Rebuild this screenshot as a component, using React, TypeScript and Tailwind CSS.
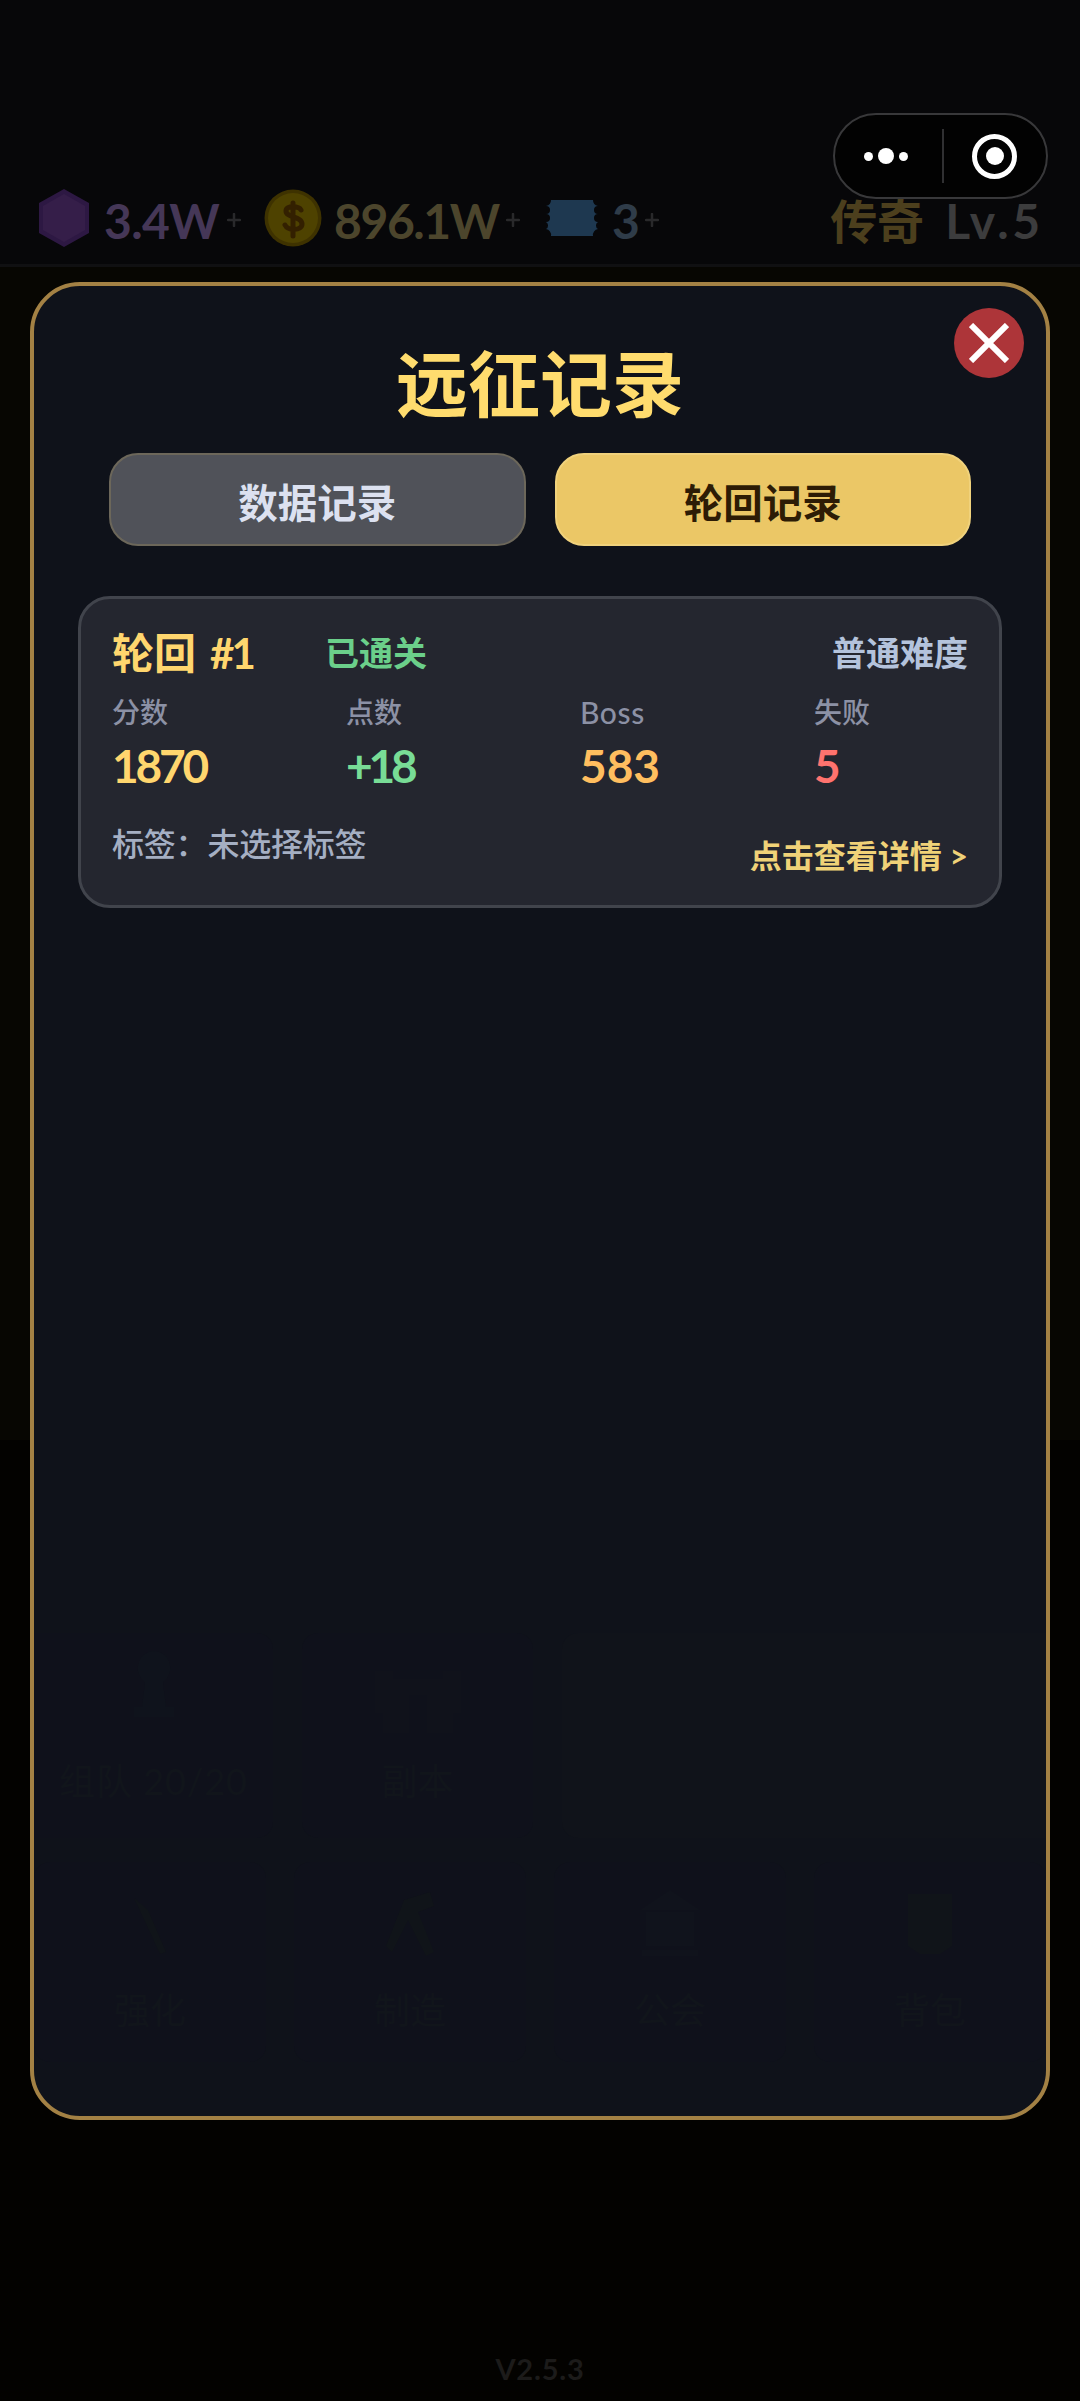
import React, { useState } from 'react';
interface Stat {
  label: string;
  value: string;
  color: string;
}
interface Tile {
  label: string;
  path: string;
  color: string;
}
const stats: Stat[] = [
  { label: '分数', value: '1870', color: 'text-[#ffd66e] tracking-[-3.2px]' },
  { label: '点数', value: '+18', color: 'text-[#78dc96] tracking-[-4.2px]' },
  { label: 'Boss', value: '583', color: 'text-[#ffbe5f]' },
  { label: '失败', value: '5', color: 'text-[#ff736e]' }
];
const tiles: Tile[] = [
  { label: '强化', path: 'M20 12 34 24 52 66 46 68z', color: 'fill-[#101419]' },
  { label: '制造', path: 'M30 14 56 6 60 20 44 26 60 66 52 70 34 34 18 66 12 60z', color: 'fill-[#101419]' },
  { label: '公会', path: 'M36 4 66 24H6zM12 26h48v34H12zM8 64h56v6H8z', color: 'fill-[#10131c]' },
  { label: '背包', path: 'M14 8h44v52l-12 8H26l-12-8z', color: 'fill-[#101419]' }
];
const PlusMark = () => <svg viewBox="0 0 14 14" className="mt-1 h-[14px] w-[14px] shrink-0">
    <path d="M7 1v12M1 7h12" stroke="#29292b" strokeWidth="2.5" strokeLinecap="round" />
  </svg>;
const ResourceBar = () => {
  return <header className="h-[267px] border-b-[3px] border-[#101012] bg-[#070709] pt-[188px]">
      <div className="flex h-[60px] items-center pl-[38px] pr-[39px] text-[48px] font-bold leading-none">
        <svg viewBox="0 0 52 60" className="h-[60px] w-[52px] shrink-0">
          <path d="M26 1 51 15v30L26 59 1 45V15z" fill="#2d1843" />
          <path d="M26 6 47 18v24L26 54 5 42V18z" fill="#351e49" />
        </svg>
        <span className="ml-[14px] mt-[6px] w-[118px] whitespace-nowrap tracking-[-0.6px] text-[#453757]">3.4W</span>
        <span className="ml-[5px]"><PlusMark /></span>
        <svg viewBox="0 0 58 58" className="ml-[23px] h-[58px] w-[58px] shrink-0">
          <circle cx="29" cy="29" r="28.5" fill="#3e3200" />
          <circle cx="29" cy="29" r="25" fill="#4e4200" />
          <path d="M37 21c-2-4-15-5-15 1 0 7 16 5 16 13 0 7-14 7-17 1M29 14v33" fill="none" stroke="#332000" strokeWidth="5" strokeLinecap="round" />
        </svg>
        <span className="ml-[12px] mt-[6px] w-[168px] whitespace-nowrap tracking-[-1.4px] text-[#4c452c]">896.1W</span>
        <span className="ml-[4px]"><PlusMark /></span>
        <svg viewBox="0 0 54 36" className="ml-[25px] h-[36px] w-[54px] shrink-0">
          <path d="M6 0h42a6 6 0 0 0 5 6 4 4 0 0 0 0 8 4 4 0 0 0 0 8 4 4 0 0 0 0 7 6 6 0 0 0-5 7H6a6 6 0 0 0-5-7 4 4 0 0 0 0-7 4 4 0 0 0 0-8 4 4 0 0 0 0-8 6 6 0 0 0 5-6z" fill="#1e3850" />
        </svg>
        <span className="ml-[13px] mt-[6px] w-[28px] text-[#2f3c49]">3</span>
        <span className="ml-[5px]"><PlusMark /></span>
        <span className="ml-auto mt-[7px] whitespace-nowrap text-[47px] text-[#4c3f1d]">传奇</span>
        <span className="-mr-[3px] ml-[21px] mt-[6px] whitespace-nowrap tracking-[3.8px] text-[#3c3c3d]">Lv.5</span>
      </div>
    </header>;
};
const Capsule = () => <div className="absolute left-[833px] top-[113px] flex h-[86px] w-[215px] items-center rounded-full border-2 border-[#38383a] bg-[#020202]">
    <div className="flex flex-1 items-center justify-center gap-[5px] pr-[4px]">
      <i className="h-[9px] w-[9px] rounded-full bg-white" />
      <i className="h-[16px] w-[16px] rounded-full bg-white" />
      <i className="h-[9px] w-[9px] rounded-full bg-white" />
    </div>
    <div className="h-[54px] w-[2px] bg-[#303032]" />
    <div className="flex flex-1 items-center justify-center">
      <div className="flex h-[45px] w-[45px] items-center justify-center rounded-full border-[5px] border-white">
        <i className="h-[18px] w-[18px] rounded-full bg-white" />
      </div>
    </div>
  </div>;
const RecordCard = () => {
  return <button className="mt-[50px] block h-[312px] w-full rounded-[32px] border-[3px] border-[#41444c] bg-[#24262f] px-[31px] text-left">
      <div className="flex h-[50px] items-center pt-[2px] leading-none">
        <span className="w-[213px] whitespace-nowrap text-[42px] font-bold text-[#ffd66e]">轮回<span className="ml-[14px] tracking-[-3px]">#1</span></span>
        <span className="text-[34px] font-bold text-[#6bcf8a]">已通关</span>
        <span className="ml-auto text-[34px] font-bold text-[#b4c3dc]">普通难度</span>
      </div>
      <div className="mt-[15px] flex">
        {stats.map(stat => <div key={stat.label} className="w-[234px] shrink-0">
            <div className="h-[40px] text-[28px] font-medium leading-[40px] text-[#8c91a5]">
              <span className={stat.label === 'Boss' ? 'text-[30px] tracking-[0.6px]' : ''}>{stat.label}</span>
            </div>
            <div className={`mt-[6px] h-[56px] text-[46px] font-bold leading-[56px] ${stat.color}`}>{stat.value}</div>
          </div>)}
      </div>
      <div className="mt-[28px] flex justify-between text-[32px] leading-[44px]">
        <span className="font-medium tracking-[-0.2px] text-[#a5afc3]">标签：未选择标签</span>
        <span className="mt-[12px] font-bold text-[#f0d278]">点击查看详情 &gt;</span>
      </div>
    </button>;
};
// camp menu dimmed behind the dialog
const CampMenu = () => <div aria-hidden="true" className="-mx-[44px] mt-[725px] text-center text-[36px] leading-[44px] text-[#11151b]">
    <div className="flex h-[205px] gap-[29px]">
      <div className="w-[239px] rounded-r-[16px] bg-[#0f111b] pt-[16px]">
        <svg viewBox="0 0 72 72" className="mx-auto h-[72px] w-[72px] fill-[#0f131c]">
          <path d="M36 2a17 17 0 0 1 9 31l3 25h8v10H16V58h8l3-25a17 17 0 0 1 9-31z" />
        </svg>
        <div className="mt-[38px] whitespace-nowrap tracking-[1px]">组队 20/20</div>
      </div>
      <div className="w-[231px] rounded-[16px] bg-[#0f111b] pt-[36px]">
        <svg viewBox="0 0 86 66" className="mx-auto h-[66px] w-[86px] fill-[#10121b]">
          <path d="M0 2h18v8h50V2h18v42h-8v20H52V26H34v38H8V44H0z" />
        </svg>
        <div className="mt-[24px]">副本</div>
      </div>
      <div className="flex-1 rounded-l-[16px] bg-[#10131a]" />
    </div>
    <div className="mt-[24px] flex h-[200px] gap-[28px]">
      {tiles.map(tile => <div key={tile.label} className="flex-1 rounded-[16px] bg-[#0f111b] pt-[24px]">
          <svg viewBox="0 0 72 72" className={`mx-auto h-[72px] w-[72px] ${tile.color}`}>
            <path d={tile.path} />
          </svg>
          <div className="mt-[30px]">{tile.label}</div>
        </div>)}
    </div>
  </div>;
export default function App() {
  const [tab, setTab] = useState('cycle');
  const active = 'border-[#f0d27c] bg-[#ebc766] text-[#2d1c05]';
  const idle = 'border-[#6c675a] bg-[#505259] text-[#dce1f0]';
  return <div className="relative flex h-[2401px] w-[1080px] flex-col overflow-hidden bg-[linear-gradient(#070602_1440px,#030200_1440px)] font-[Lato,'Noto_Sans_CJK_SC',sans-serif]">
      <ResourceBar />
      <Capsule />
      <main className="relative mx-[30px] mt-[15px] h-[1838px] shrink-0 rounded-[50px] border-4 border-[#a38144] bg-[#0f121a] px-[44px]">
        <button aria-label="关闭" className="absolute right-[22px] top-[22px] flex h-[70px] w-[70px] items-center justify-center rounded-full bg-[#ad3539]">
          <svg viewBox="0 0 40 40" className="h-[40px] w-[40px]">
            <path d="M2 2 38 38M38 2 2 38" stroke="#fff" strokeWidth="6" />
          </svg>
        </button>
        <h1 className="mt-[57px] h-[80px] text-center text-[72px] font-bold leading-[80px] text-[#ffdc6e]">远征记录</h1>
        <div className="mt-[30px] flex gap-[29px] px-[31px] text-[39.5px] font-bold">
          <button onClick={() => setTab('data')} className={`h-[93px] flex-1 rounded-[29px] border-2 pt-[6px] ${tab === 'data' ? active : idle}`}>数据记录</button>
          <button onClick={() => setTab('cycle')} className={`h-[93px] flex-1 rounded-[29px] border-2 pt-[6px] ${tab === 'cycle' ? active : idle}`}>轮回记录</button>
        </div>
        <RecordCard />
        <CampMenu />
      </main>
      <footer className="mt-[231px] text-center text-[29px] font-bold leading-[36px] tracking-[0.8px] text-[#1c1b1a]">V2.5.3</footer>
    </div>;
}
